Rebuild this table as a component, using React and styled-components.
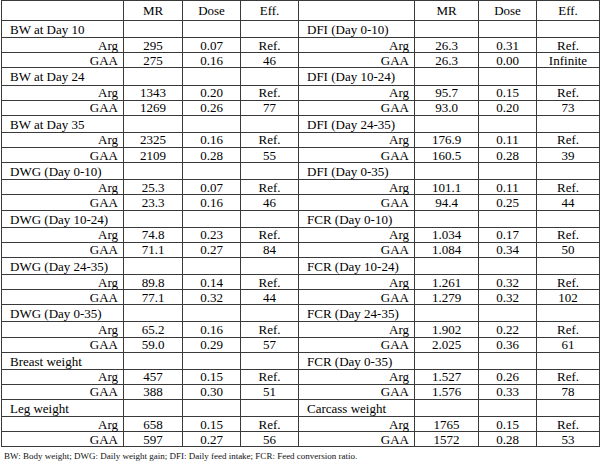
import React from "react";
import styled, { createGlobalStyle } from "styled-components";

const GlobalStyle = createGlobalStyle`
  html, body {
    margin: 0;
    padding: 0;
    background: #ffffff;
  }
  body {
    font-family: "Liberation Serif", "Times New Roman", serif;
    color: #000;
  }
`;

const left = [
  { label: "BW at Day 10", arg: ["295", "0.07", "Ref."], gaa: ["275", "0.16", "46"] },
  { label: "BW at Day 24", arg: ["1343", "0.20", "Ref."], gaa: ["1269", "0.26", "77"] },
  { label: "BW at Day 35", arg: ["2325", "0.16", "Ref."], gaa: ["2109", "0.28", "55"] },
  { label: "DWG (Day 0-10)", arg: ["25.3", "0.07", "Ref."], gaa: ["23.3", "0.16", "46"] },
  { label: "DWG (Day 10-24)", arg: ["74.8", "0.23", "Ref."], gaa: ["71.1", "0.27", "84"] },
  { label: "DWG (Day 24-35)", arg: ["89.8", "0.14", "Ref."], gaa: ["77.1", "0.32", "44"] },
  { label: "DWG (Day 0-35)", arg: ["65.2", "0.16", "Ref."], gaa: ["59.0", "0.29", "57"] },
  { label: "Breast weight", arg: ["457", "0.15", "Ref."], gaa: ["388", "0.30", "51"] },
  { label: "Leg weight", arg: ["658", "0.15", "Ref."], gaa: ["597", "0.27", "56"] },
];

const right = [
  { label: "DFI (Day 0-10)", arg: ["26.3", "0.31", "Ref."], gaa: ["26.3", "0.00", "Infinite"] },
  { label: "DFI (Day 10-24)", arg: ["95.7", "0.15", "Ref."], gaa: ["93.0", "0.20", "73"] },
  { label: "DFI (Day 24-35)", arg: ["176.9", "0.11", "Ref."], gaa: ["160.5", "0.28", "39"] },
  { label: "DFI (Day 0-35)", arg: ["101.1", "0.11", "Ref."], gaa: ["94.4", "0.25", "44"] },
  { label: "FCR (Day 0-10)", arg: ["1.034", "0.17", "Ref."], gaa: ["1.084", "0.34", "50"] },
  { label: "FCR (Day 10-24)", arg: ["1.261", "0.32", "Ref."], gaa: ["1.279", "0.32", "102"] },
  { label: "FCR (Day 24-35)", arg: ["1.902", "0.22", "Ref."], gaa: ["2.025", "0.36", "61"] },
  { label: "FCR (Day 0-35)", arg: ["1.527", "0.26", "Ref."], gaa: ["1.576", "0.33", "78"] },
  { label: "Carcass weight", arg: ["1765", "0.15", "Ref."], gaa: ["1572", "0.28", "53"] },
];

const widths = [122, 59, 58, 58, 116, 64, 58, 63];

const Page = styled.div`
  width: 600px;
`;

const Table = styled.table`
  border-collapse: collapse;
  table-layout: fixed;
  width: 598px;
  margin-left: 1px;
  border: 1px solid #555;
  font-size: 13px;
  line-height: 1;
`;

const HeadRow = styled.tr`
  height: 20px;
`;

const Row = styled.tr`
  height: ${(p) => (p.$label ? "17.2px" : "15.1px")};
`;

const Cell = styled.td`
  border: 1px solid #3a3a3a;
  padding: 0;
  text-align: center;
  vertical-align: middle;
  white-space: nowrap;
`;

const LabelCell = styled(Cell)`
  text-align: left;
  padding-left: 8px;
  padding-top: 1px;
`;

const NameCell = styled(Cell)`
  text-align: right;
  padding-right: 5px;
`;

const Footnote = styled.p`
  margin: 5px 0 0 4px;
  font-size: 9px;
  line-height: 1.1;
  color: #111;
`;

function Values({ values }) {
  return values.map((v, i) => <Cell key={i}>{v}</Cell>);
}

export default function App() {
  const rows = [];
  left.forEach((g, i) => {
    const r = right[i];
    rows.push(
      <Row key={`l${i}`} $label>
        <LabelCell>{g.label}</LabelCell>
        <Cell />
        <Cell />
        <Cell />
        <LabelCell>{r.label}</LabelCell>
        <Cell />
        <Cell />
        <Cell />
      </Row>
    );
    rows.push(
      <Row key={`a${i}`}>
        <NameCell>Arg</NameCell>
        <Values values={g.arg} />
        <NameCell>Arg</NameCell>
        <Values values={r.arg} />
      </Row>
    );
    rows.push(
      <Row key={`g${i}`}>
        <NameCell>GAA</NameCell>
        <Values values={g.gaa} />
        <NameCell>GAA</NameCell>
        <Values values={r.gaa} />
      </Row>
    );
  });

  return (
    <Page>
      <GlobalStyle />
      <Table>
        <colgroup>
          {widths.map((w, i) => (
            <col key={i} style={{ width: w }} />
          ))}
        </colgroup>
        <tbody>
          <HeadRow>
            <Cell />
            <Cell>MR</Cell>
            <Cell>Dose</Cell>
            <Cell>Eff.</Cell>
            <Cell />
            <Cell>MR</Cell>
            <Cell>Dose</Cell>
            <Cell>Eff.</Cell>
          </HeadRow>
          {rows}
        </tbody>
      </Table>
      <Footnote>
        BW: Body weight; DWG: Daily weight gain; DFI: Daily feed intake; FCR:
        Feed conversion ratio.
      </Footnote>
    </Page>
  );
}
